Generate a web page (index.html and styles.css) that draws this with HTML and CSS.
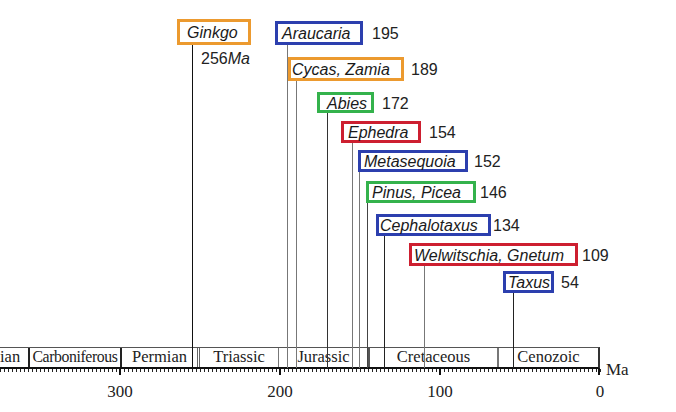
FILE: index.html
```html
<!DOCTYPE html>
<html>
<head>
<meta charset="utf-8">
<link rel="stylesheet" href="styles.css">
</head>
<body>
<div class="canvas">
  <div class="periods">
    <div class="period devonian">ian</div>
    <div class="period carboniferous">Carboniferous</div>
    <div class="period permian">Permian</div>
    <div class="period triassic">Triassic</div>
    <div class="period jurassic">Jurassic</div>
    <div class="period cretaceous">Cretaceous</div>
    <div class="period cenozoic">Cenozoic</div>
  </div>
  <div class="ticks"></div>

  <svg class="lines" width="676" height="412" viewBox="0 0 676 412">
    <g stroke-width="1">
      <line x1="192.5" y1="45" x2="192.5" y2="368" stroke="#111"/>
      <line x1="287.5" y1="45" x2="287.5" y2="368" stroke="#777"/>
      <line x1="296.5" y1="81" x2="296.5" y2="368" stroke="#777"/>
      <line x1="327.5" y1="113" x2="327.5" y2="368" stroke="#333"/>
      <line x1="352.5" y1="143" x2="352.5" y2="368" stroke="#777"/>
      <line x1="359.5" y1="172" x2="359.5" y2="368" stroke="#777"/>
      <line x1="367.5" y1="203" x2="367.5" y2="368" stroke="#444"/>
      <line x1="384.5" y1="236" x2="384.5" y2="368" stroke="#222"/>
      <line x1="424.5" y1="266" x2="424.5" y2="368" stroke="#777"/>
      <line x1="513.5" y1="293" x2="513.5" y2="368" stroke="#222"/>
    </g>
    <g stroke="#111" stroke-width="2">
      <line x1="120" y1="368" x2="120" y2="375"/>
      <line x1="280" y1="368" x2="280" y2="375"/>
      <line x1="440" y1="368" x2="440" y2="375"/>
      <line x1="599" y1="368" x2="599" y2="375"/>
    </g>
  </svg>

  <div class="node" style="--x:177px;--y:19px">
    <span class="box orange" style="--w:74px;--h:26px;--pad:7px">Ginkgo</span>
  </div>
  <div class="note" style="--x:201px;--y:49px">256<i>Ma</i></div>

  <div class="node" style="--x:275px;--y:21px">
    <span class="box blue" style="--w:88px;--h:24px;--pad:4px">Araucaria</span>
    <span class="age" style="--gap:9px">195</span>
  </div>
  <div class="node" style="--x:288px;--y:57px">
    <span class="box orange" style="--w:116px;--h:24px;--pad:1px">Cycas, Zamia</span>
    <span class="age" style="--gap:7px">189</span>
  </div>
  <div class="node" style="--x:317px;--y:92px">
    <span class="box green" style="--w:57px;--h:21px;--pad:7px">Abies</span>
    <span class="age" style="--gap:8px">172</span>
  </div>
  <div class="node" style="--x:341px;--y:121px">
    <span class="box red" style="--w:80px;--h:22px;--pad:4px">Ephedra</span>
    <span class="age" style="--gap:8px">154</span>
  </div>
  <div class="node" style="--x:358px;--y:150px">
    <span class="box blue" style="--w:110px;--h:22px;--pad:3px">Metasequoia</span>
    <span class="age" style="--gap:6px">152</span>
  </div>
  <div class="node" style="--x:366px;--y:181px">
    <span class="box green" style="--w:110px;--h:22px;--pad:3px">Pinus, Picea</span>
    <span class="age" style="--gap:4px">146</span>
  </div>
  <div class="node" style="--x:376px;--y:214px">
    <span class="box blue" style="--w:115px;--h:22px;--pad:1px">Cephalotaxus</span>
    <span class="age" style="--gap:2px">134</span>
  </div>
  <div class="node" style="--x:409px;--y:243px">
    <span class="box red" style="--w:169px;--h:23px;--pad:2px">Welwitschia, Gnetum</span>
    <span class="age" style="--gap:4px">109</span>
  </div>
  <div class="node" style="--x:503px;--y:271px">
    <span class="box blue" style="--w:51px;--h:22px;--pad:2px">Taxus</span>
    <span class="age" style="--gap:7px">54</span>
  </div>

  <div class="tick-label" style="--x:120px">300</div>
  <div class="tick-label" style="--x:280px">200</div>
  <div class="tick-label" style="--x:440px">100</div>
  <div class="tick-label" style="--x:600px">0</div>
  <div class="unit">Ma</div>
</div>
</body>
</html>
```

FILE: styles.css
```css
html, body {
  margin: 0;
  padding: 0;
  background: #fff;
}

.canvas {
  position: relative;
  width: 676px;
  height: 412px;
  overflow: hidden;
  background: #fff;
  font-family: "Liberation Sans", Arial, sans-serif;
  color: #222;
}

/* geological time bar */
.periods {
  position: absolute;
  left: 0;
  top: 347px;
  width: 600px;
  height: 22px;
  box-sizing: border-box;
  display: flex;
  border-top: 1px solid #555;
  border-bottom: 2px solid #111;
  border-right: 2px solid #333;
  font-family: "Liberation Serif", "Times New Roman", serif;
  font-size: 16.5px;
  color: #222;
}

.period {
  box-sizing: border-box;
  display: flex;
  align-items: center;
  justify-content: center;
  white-space: nowrap;
  height: 100%;
  line-height: 1;
  padding-bottom: 1px;
}

.devonian {
  width: 28px;
  justify-content: flex-start;
  padding-left: 0;
}
.carboniferous {
  width: 92px;
  border-left: 2px solid #222;
  font-size: 15.8px;
  letter-spacing: -0.4px;
}
.permian {
  width: 77px;
  border-left: 2px solid #222;
}
.triassic {
  width: 81px;
  border-left: 3px double #666;
}
.jurassic {
  width: 90px;
  border-left: 1px solid #777;
}
.cretaceous {
  width: 129px;
  border-left: 2px solid #555;
}
.cenozoic {
  width: 101px;
  border-left: 2px solid #777;
}

.ticks {
  position: absolute;
  left: 0;
  top: 369px;
  width: 601px;
  height: 3px;
  background: repeating-linear-gradient(to right, #222 0 1px, transparent 1px 4px);
}

.lines {
  position: absolute;
  left: 0;
  top: 0;
}

/* taxa nodes */
.node {
  position: absolute;
  left: var(--x);
  top: var(--y);
  display: flex;
  align-items: center;
}

.box {
  box-sizing: border-box;
  width: var(--w);
  height: var(--h);
  padding-left: var(--pad);
  padding-top: 2px;
  border: 3px solid;
  display: flex;
  align-items: center;
  font-style: italic;
  font-size: 16px;
  line-height: 1;
  white-space: nowrap;
  color: #1a1a1a;
  background: #fff;
}

.orange { border-color: #ec9a2f; }
.blue { border-color: #2c3fae; }
.green { border-color: #34b24c; }
.red { border-color: #cd1f30; }

.age {
  margin-left: var(--gap);
  padding-top: 2px;
  font-size: 16px;
  line-height: 1;
  color: #222;
}

.note {
  position: absolute;
  left: var(--x);
  top: var(--y);
  font-size: 16px;
  line-height: 20px;
  color: #222;
}

.tick-label {
  position: absolute;
  left: var(--x);
  top: 382px;
  transform: translateX(-50%);
  font-family: "Liberation Serif", "Times New Roman", serif;
  font-size: 17px;
  line-height: 20px;
  color: #222;
}

.unit {
  position: absolute;
  left: 606px;
  top: 360px;
  font-family: "Liberation Serif", "Times New Roman", serif;
  font-size: 17px;
  line-height: 20px;
  color: #222;
}
```
